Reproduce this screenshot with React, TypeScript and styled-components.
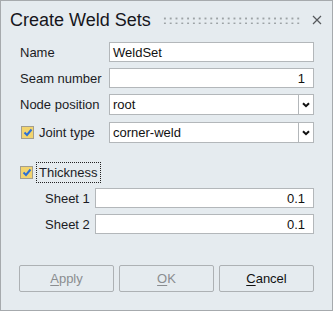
import styled, { createGlobalStyle } from 'styled-components';

const GlobalStyle = createGlobalStyle`
  html, body {
    margin: 0;
    padding: 0;
    background: #e5ebef;
  }
  * { box-sizing: border-box; }
`;

const Dialog = styled.div`
  width: 333px;
  height: 311px;
  border: 1px solid #a6aaad;
  background: #e5ebef;
  font-family: 'Liberation Sans', Arial, sans-serif;
  font-size: 13px;
  color: #1b1b24;
  display: flex;
  flex-direction: column;
`;

const TitleBar = styled.div`
  height: 38px;
  display: flex;
  align-items: center;
  padding: 0 9px 0 9px;
`;

const Title = styled.div`
  font-size: 18px;
  color: #16161c;
  white-space: nowrap;
  margin-top: 1px;
`;

const Grip = styled.div`
  flex: 1;
  height: 8px;
  margin: 0 10px 0 11px;
  background-image: radial-gradient(circle, #9da3a6 1px, transparent 1.2px);
  background-size: 5.8px 5px;
  background-position: 0 0;
`;

const Close = styled.svg`
  width: 10px;
  height: 10px;
  margin-right: 1px;
`;

const Form = styled.div`
  display: flex;
  flex-direction: column;
  padding: 3px 18px 0 18px;
`;

const Row = styled.div<{ $h: number; $mt: number; $indent?: number }>`
  display: flex;
  align-items: center;
  height: ${(p) => p.$h}px;
  margin-top: ${(p) => p.$mt}px;
  padding-left: ${(p) => p.$indent ?? 0}px;
`;

const Label = styled.div<{ $w: number }>`
  width: ${(p) => p.$w}px;
  padding-left: 1px;
  white-space: nowrap;
`;

const Input = styled.div<{ $right?: boolean }>`
  flex: 1;
  height: 100%;
  background: #fff;
  border: 1px solid #b3b7ba;
  display: flex;
  align-items: center;
  justify-content: ${(p) => (p.$right ? 'flex-end' : 'flex-start')};
  padding: 0 8px 0 3px;
  color: #111;
`;

const Select = styled.div`
  flex: 1;
  height: 100%;
  background: #fff;
  border: 1px solid #b3b7ba;
  display: flex;
  align-items: center;
`;

const SelectText = styled.div`
  flex: 1;
  padding-left: 3px;
  color: #111;
`;

const Arrow = styled.div`
  width: 15px;
  height: 100%;
  border-left: 1px solid #b3b7ba;
  display: flex;
  align-items: center;
  justify-content: center;
`;

const Check = styled.div`
  width: 13px;
  height: 13px;
  background: #f2d46e;
  border: 1px solid #a39e8e;
  display: flex;
  align-items: center;
  justify-content: center;
  margin-left: 1px;
`;

const CheckLabel = styled.div<{ $focus?: boolean }>`
  margin-left: ${(p) => (p.$focus ? 3 : 5)}px;
  padding: 2px ${(p) => (p.$focus ? 2 : 0)}px;
  border: ${(p) => (p.$focus ? '1px dotted #222' : 'none')};
  white-space: nowrap;
`;

const Buttons = styled.div`
  display: flex;
  gap: 5px;
  padding: 0 18px;
  margin-top: auto;
  margin-bottom: 18px;
`;

const Button = styled.div<{ $disabled?: boolean }>`
  width: 95px;
  height: 27px;
  border: 1px solid #adb1b4;
  border-radius: 2px;
  display: flex;
  align-items: center;
  justify-content: center;
  color: ${(p) => (p.$disabled ? '#8a8d90' : '#111')};
  u { text-underline-offset: 2px; }
`;

function Tick() {
  return (
    <svg width="10" height="9" viewBox="0 0 10 9">
      <path d="M1.5 4.5 L4 7 L8.5 1.5" fill="none" stroke="#2b6fd6" strokeWidth="2" />
    </svg>
  );
}

function Chevron() {
  return (
    <svg width="8" height="6" viewBox="0 0 8 6">
      <path d="M1 1.2 L4 4.2 L7 1.2" fill="none" stroke="#111" strokeWidth="2" />
    </svg>
  );
}

export default function App() {
  return (
    <>
      <GlobalStyle />
      <Dialog>
        <TitleBar>
          <Title>Create Weld Sets</Title>
          <Grip />
          <Close viewBox="0 0 10 10">
            <path d="M1 1 L9 9 M9 1 L1 9" stroke="#55595c" strokeWidth="1.2" />
          </Close>
        </TitleBar>
        <Form>
          <Row $h={20} $mt={0}>
            <Label $w={90}>Name</Label>
            <Input>WeldSet</Input>
          </Row>
          <Row $h={20} $mt={6}>
            <Label $w={90}>Seam number</Label>
            <Input $right>1</Input>
          </Row>
          <Row $h={21} $mt={6}>
            <Label $w={90}>Node position</Label>
            <Select>
              <SelectText>root</SelectText>
              <Arrow><Chevron /></Arrow>
            </Select>
          </Row>
          <Row $h={21} $mt={7}>
            <Label $w={90}>
              <Row $h={21} $mt={0}>
                <Check><Tick /></Check>
                <CheckLabel>Joint type</CheckLabel>
              </Row>
            </Label>
            <Select>
              <SelectText>corner-weld</SelectText>
              <Arrow><Chevron /></Arrow>
            </Select>
          </Row>
          <Row $h={20} $mt={19}>
            <Check><Tick /></Check>
            <CheckLabel $focus>Thickness</CheckLabel>
          </Row>
          <Row $h={20} $mt={6} $indent={25}>
            <Label $w={51}>Sheet 1</Label>
            <Input $right>0.1</Input>
          </Row>
          <Row $h={20} $mt={6} $indent={25}>
            <Label $w={51}>Sheet 2</Label>
            <Input $right>0.1</Input>
          </Row>
        </Form>
        <Buttons>
          <Button $disabled><span><u>A</u>pply</span></Button>
          <Button $disabled><span><u>O</u>K</span></Button>
          <Button><span><u>C</u>ancel</span></Button>
        </Buttons>
      </Dialog>
    </>
  );
}
